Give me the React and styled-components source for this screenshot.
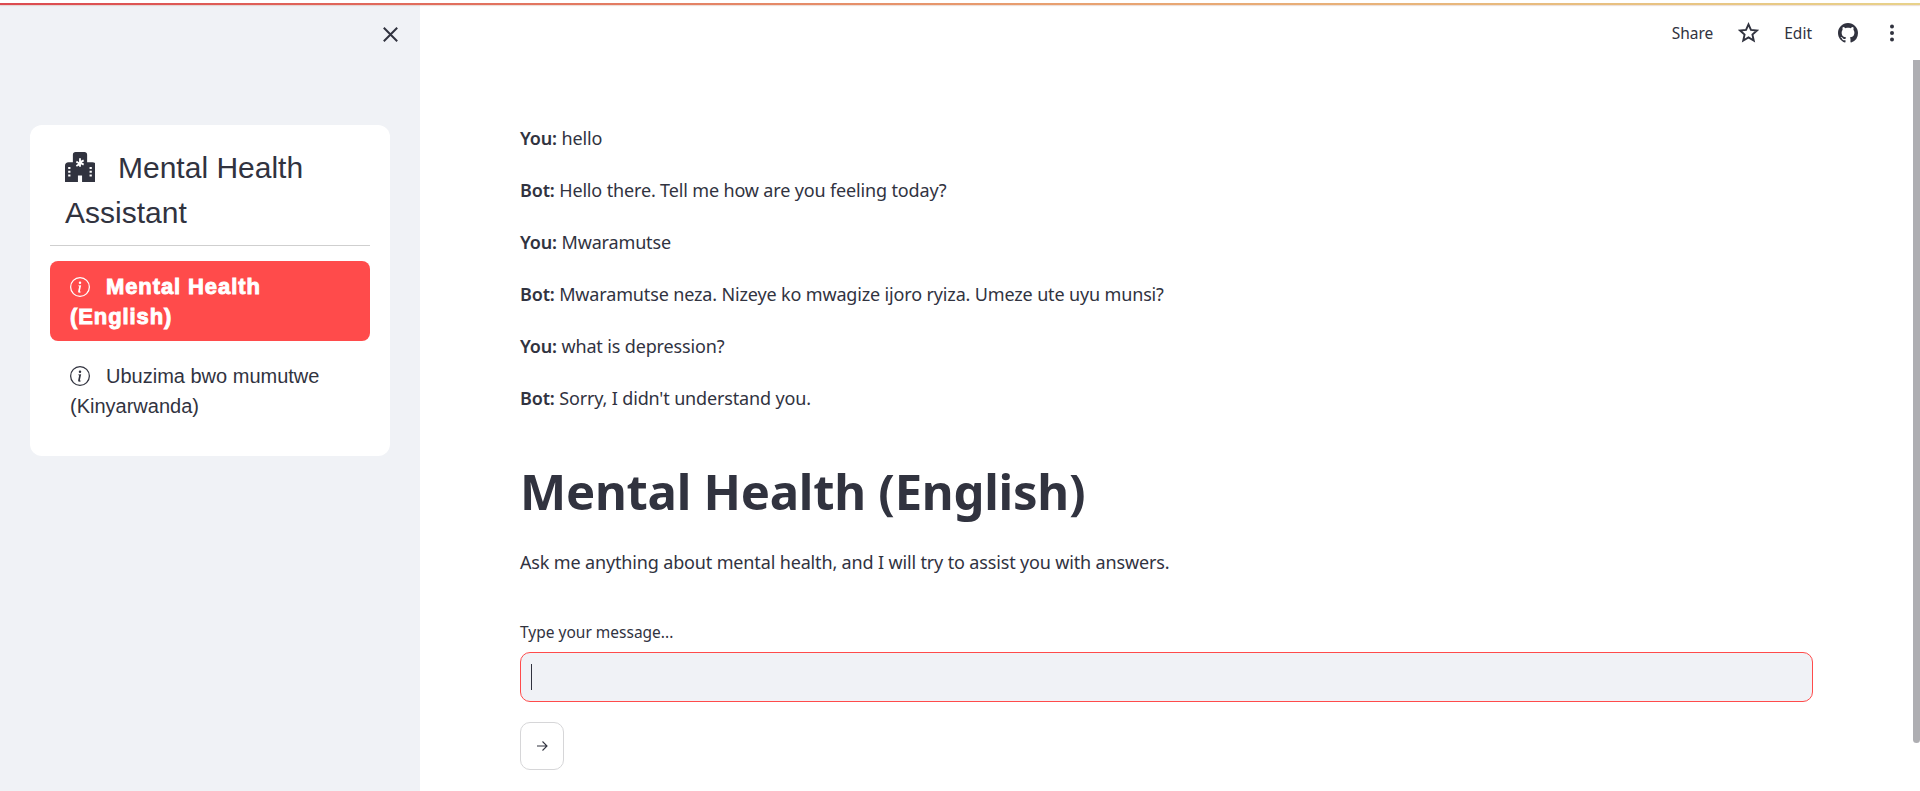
import React from "react";
import styled, { createGlobalStyle } from "styled-components";

const Global = createGlobalStyle`
  html, body { margin: 0; padding: 0; height: 100%; overflow: hidden; background: #fff; }
  * { box-sizing: border-box; }
  #root { height: 100%; }
`;

const Page = styled.div`
  height: 791px;
  display: flex;
  flex-direction: column;
  padding-top: 3px;
  color: #31333f;
  font-family: "Noto Sans", sans-serif;
  overflow: hidden;
`;
const Decoration = styled.div`
  height: 2px;
  flex: none;
  background: linear-gradient(90deg, #dc4a50 0%, #e8a070 55%, #e8d28a 100%);
  box-shadow: 0 1px 1px rgba(200, 160, 140, 0.35);
  position: relative;
`;
const Body = styled.div`
  flex: 1;
  display: flex;
  min-height: 0;
`;
const Sidebar = styled.aside`
  width: 420px;
  flex: none;
  background: #f0f2f6;
  padding: 0 30px;
  display: flex;
  flex-direction: column;
`;
const CloseRow = styled.div`
  height: 120px;
  display: flex;
  justify-content: flex-end;
  padding: 22px 0 0;
  margin-right: -8px;
  align-items: flex-start;
  color: #31333f;
`;
const Card = styled.div`
  background: #fff;
  border-radius: 12px;
  padding: 20px;
  height: 331px;
  font-family: "Liberation Sans", Arial, sans-serif;
`;
const MenuTitle = styled.div`
  font-size: 30px;
  line-height: 45px;
  padding: 0 0 0 15px;
  height: 90px;
  svg { vertical-align: -4px; margin-right: 23px; }
`;
const Rule = styled.hr`
  border: 0;
  border-top: 1px solid #cfcfcf;
  margin: 10px 0 15px;
`;
const NavItem = styled.div`
  border-radius: 8px;
  padding: 11px 20px;
  font-size: ${p => (p.$active ? 22 : 20)}px;
  line-height: 30px;
  height: 80px;
  margin-bottom: 9px;
  color: ${p => (p.$active ? "#fff" : "#31333f")};
  background: ${p => (p.$active ? "#ff4b4b" : "transparent")};
  font-weight: ${p => (p.$active ? 700 : 400)};
  letter-spacing: ${p => (p.$active ? "0.9px" : "0")};
  -webkit-text-stroke: ${p => (p.$active ? "0.9px #fff" : "0")};
  svg { vertical-align: -3px; margin-right: 16px; }
`;
const Main = styled.main`
  flex: 1;
  position: relative;
  min-width: 0;
  padding: 120px 107px 0 100px;
`;
const Toolbar = styled.div`
  position: absolute;
  top: 0;
  right: 0;
  left: 0;
  height: 55px;
  display: flex;
  justify-content: flex-end;
  align-items: center;
  padding-right: 18px;
  font-size: 15.5px;
`;
const ToolText = styled.span`
  margin-right: ${p => p.$mr}px;
`;
const ToolIcon = styled.span`
  display: flex;
  margin-right: ${p => p.$mr}px;
`;
const Scrollbar = styled.div`
  position: absolute;
  top: 55px;
  right: 0;
  width: 7px;
  height: 683px;
  background: #aeaeb2;
  border-radius: 0 0 4px 4px;
`;
const Message = styled.p`
  margin: 0 0 26px;
  height: 26px;
  font-size: 18px;
  line-height: 26px;
  letter-spacing: -0.15px;
  strong { font-weight: 600; }
`;
const Heading = styled.h1`
  margin: 45px 0 23px;
  font-size: 49px;
  line-height: 70px;
  font-weight: 700;
  letter-spacing: -0.25px;
`;
const Intro = styled.p`
  margin: 0 0 47px;
  font-size: 18px;
  line-height: 26px;
  letter-spacing: -0.15px;
`;
const Label = styled.label`
  display: block;
  font-size: 15.5px;
  line-height: 20px;
  margin-bottom: 10px;
`;
const InputBox = styled.div`
  height: 50px;
  background: #f0f2f6;
  border: 1px solid #ff4b4b;
  border-radius: 10px;
  padding: 10px 10px;
  display: flex;
  align-items: center;
  margin-bottom: 20px;
`;
const Caret = styled.span`
  width: 1px;
  height: 26px;
  background: #31333f;
`;
const SendButton = styled.button`
  width: 44px;
  height: 48px;
  background: #fff;
  border: 1px solid #d6d6d8;
  border-radius: 10px;
  padding: 0;
  display: flex;
  align-items: center;
  justify-content: center;
  color: #31333f;
`;

const InfoIcon = () => (
  <svg width="20" height="20" viewBox="0 0 16 16" fill="currentColor">
    <path d="M8 15A7 7 0 1 1 8 1a7 7 0 0 1 0 14zm0 1A8 8 0 1 0 8 0a8 8 0 0 0 0 16z" />
    <path d="m8.93 6.588-2.29.287-.082.38.45.083c.294.07.352.176.288.469l-.738 3.468c-.194.897.105 1.319.808 1.319.545 0 1.178-.252 1.465-.598l.088-.416c-.2.176-.492.246-.686.246-.275 0-.375-.193-.304-.533L8.93 6.588zM9 4.5a1 1 0 1 1-2 0 1 1 0 0 1 2 0z" />
  </svg>
);
const HospitalIcon = () => (
  <svg width="30" height="30" viewBox="0 0 16 16" fill="currentColor">
    <path fillRule="evenodd" d="M5.600 0h4.800c.8 0 1.400.6 1.400 1.400V5.400h2.800c1.200 0 1.900.7 1.900 1.900V16H9.100v-3.500H6.900V16H0V7.300C0 6.100.7 5.400 1.900 5.400h2.300V1.400C4.200.6 4.800 0 5.600 0zM8.500 3.300v1.400l1.200-.7.5.9-1.200.7 1.200.7-.5.9-1.200-.7v1.400h-1V7.200l-1.200.7-.5-.9 1.200-.7-1.200-.7.5-.9 1.200.7V3.300h1zM1.700 8v1h1.200V8H1.700zm0 2v1h1.200v-1H1.700zm0 2v1h1.200v-1H1.700zM13.100 8v1h1.200V8h-1.200zm0 2v1h1.200v-1h-1.200zm0 2v1h1.200v-1h-1.200z" />
  </svg>
);
const CloseIcon = () => (
  <svg width="15" height="15" viewBox="0 0 15 15" fill="none" stroke="currentColor" strokeWidth="2">
    <path d="M.8.8l13.400 13.400M14.200.8L.8 14.200" />
  </svg>
);
const StarIcon = () => (
  <svg width="21" height="21" viewBox="0 0 24 24" fill="none" stroke="currentColor" strokeWidth="2.2" strokeLinejoin="miter">
    <path d="M12 2.800l2.800 6.300 6.900.7-5.200 4.600 1.500 6.800-6-3.500-6 3.500 1.500-6.800-5.200-4.600 6.900-.7z" />
  </svg>
);
const GithubIcon = () => (
  <svg width="20" height="20" viewBox="0 0 16 16" fill="currentColor">
    <path d="M8 0C3.580 0 0 3.580 0 8c0 3.540 2.290 6.530 5.470 7.590.4.070.55-.17.55-.38 0-.19-.01-.82-.01-1.490-2.010.37-2.530-.49-2.690-.94-.09-.23-.48-.94-.82-1.130-.28-.15-.68-.52-.01-.53.63-.01 1.080.58 1.230.82.72 1.210 1.870.87 2.330.66.070-.52.28-.87.51-1.070-1.780-.2-3.640-.89-3.640-3.950 0-.87.31-1.590.82-2.150-.08-.2-.36-1.020.08-2.120 0 0 .67-.21 2.200.82.64-.18 1.320-.27 2-.27s1.360.09 2 .27c1.530-1.040 2.200-.82 2.200-.82.44 1.100.16 1.920.08 2.120.51.560.82 1.270.82 2.150 0 3.070-1.870 3.750-3.650 3.950.29.250.54.730.54 1.480 0 1.070-.01 1.930-.01 2.200 0 .21.15.46.55.38A8.013 8.013 0 0 0 16 8c0-4.420-3.580-8-8-8z" />
  </svg>
);
const DotsIcon = () => (
  <svg width="20" height="20" viewBox="0 0 20 20" fill="currentColor">
    <circle cx="10" cy="3.500" r="2" />
    <circle cx="10" cy="10" r="2" />
    <circle cx="10" cy="16.500" r="2" />
  </svg>
);
const ArrowIcon = () => (
  <svg width="12" height="12" viewBox="0 0 12 12" fill="none" stroke="currentColor" strokeWidth="1.1">
    <path d="M1 6h10M6.500 1.500L11 6l-4.500 4.500" />
  </svg>
);

const messages = [
  ["You:", "hello"],
  ["Bot:", "Hello there. Tell me how are you feeling today?"],
  ["You:", "Mwaramutse"],
  ["Bot:", "Mwaramutse neza. Nizeye ko mwagize ijoro ryiza. Umeze ute uyu munsi?"],
  ["You:", "what is depression?"],
  ["Bot:", "Sorry, I didn't understand you."],
];

export default function App() {
  return (
    <Page>
      <Global />
      <Decoration />
      <Body>
        <Sidebar>
          <CloseRow><CloseIcon /></CloseRow>
          <Card>
            <MenuTitle><HospitalIcon />Mental Health Assistant</MenuTitle>
            <Rule />
            <NavItem $active><InfoIcon />Mental Health (English)</NavItem>
            <NavItem><InfoIcon />Ubuzima bwo mumutwe (Kinyarwanda)</NavItem>
          </Card>
        </Sidebar>
        <Main>
          <Toolbar>
            <ToolText $mr={25}>Share</ToolText>
            <ToolIcon $mr={25}><StarIcon /></ToolIcon>
            <ToolText $mr={26}>Edit</ToolText>
            <ToolIcon $mr={24}><GithubIcon /></ToolIcon>
            <ToolIcon $mr={0}><DotsIcon /></ToolIcon>
          </Toolbar>
          <Scrollbar />
          {messages.map(([who, text], i) => (
            <Message key={i}><strong>{who}</strong> {text}</Message>
          ))}
          <Heading>Mental Health (English)</Heading>
          <Intro>Ask me anything about mental health, and I will try to assist you with answers.</Intro>
          <Label>Type your message...</Label>
          <InputBox><Caret /></InputBox>
          <SendButton aria-label="Send"><ArrowIcon /></SendButton>
        </Main>
      </Body>
    </Page>
  );
}
